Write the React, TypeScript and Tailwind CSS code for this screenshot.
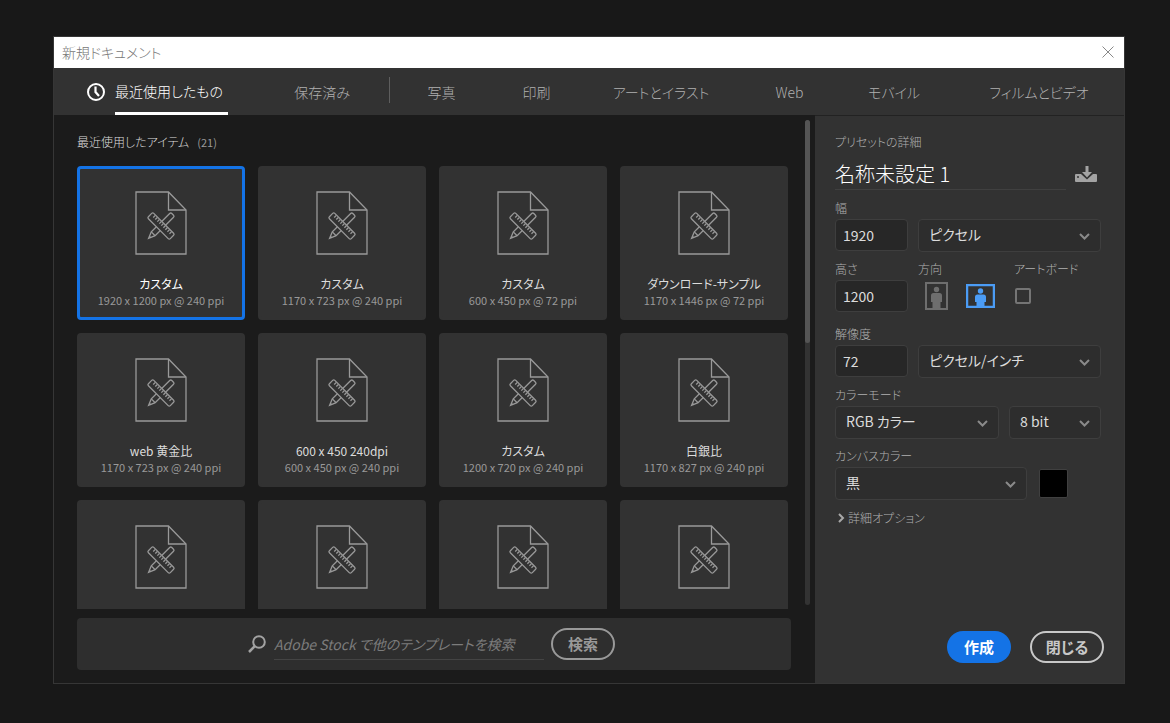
import { useState } from "react";
import clsx from "clsx";

const tabs = [
  { label: "写真", width: "w-[95px]" },
  { label: "印刷", width: "w-[95px]" },
  { label: "アートとイラスト", width: "w-[154px]" },
  { label: "Web", width: "w-[103px]" },
  { label: "モバイル", width: "w-[106px]" },
  { label: "フィルムとビデオ", width: "w-[177px] pl-[7px]" },
];

const presets = [
  { title: "カスタム", size: "1920 x 1200 px @ 240 ppi" },
  { title: "カスタム", size: "1170 x 723 px @ 240 ppi" },
  { title: "カスタム", size: "600 x 450 px @ 72 ppi" },
  { title: "ダウンロード-サンプル", size: "1170 x 1446 px @ 72 ppi" },
  { title: "web 黄金比", size: "1170 x 723 px @ 240 ppi" },
  { title: "600 x 450 240dpi", size: "600 x 450 px @ 240 ppi" },
  { title: "カスタム", size: "1200 x 720 px @ 240 ppi" },
  { title: "白銀比", size: "1170 x 827 px @ 240 ppi" },
  { title: "", size: "" },
  { title: "", size: "" },
  { title: "", size: "" },
  { title: "", size: "" },
];

function ClockIcon() {
  return (
    <svg width="20" height="20" viewBox="0 0 20 20" fill="none" stroke="#fff" strokeWidth="2">
      <circle cx="10" cy="10" r="8" />
      <path d="M9.500 4.500V10l3.500 4" strokeWidth="2.200" />
    </svg>
  );
}

function DocumentIcon() {
  return (
    <svg width="52" height="64" viewBox="0 0 52 64" fill="none" stroke="#999" strokeWidth="1.300">
      <path d="M1 1h32.500L51 19v44H1z" />
      <path d="M33.500 1v18H51" />
      <g transform="translate(26 35) rotate(-45)">
        <path d="M-11-2.700L-17.500 0l6.500 2.700h26a1.500 1.500 0 0 0 1.500-1.500v-2.400a1.500 1.500 0 0 0-1.500-1.500z" />
        <path d="M-11-2.700v5.400M-15.500-.8v1.600" />
      </g>
      <g transform="translate(26 35) rotate(45)">
        <rect x="-15.500" y="-3.800" width="31" height="7.600" rx="1.500" fill="#323232" />
        <path d="M-11.500-3.500v3M-8.600-3.500v3M-5.700-3.500v3M-2.900-3.500v3M0-3.500v3M2.900-3.500v3M5.700-3.500v3M8.600-3.500v3M11.500-3.500v3" />
      </g>
    </svg>
  );
}

function SaveIcon() {
  return (
    <svg width="22" height="17" viewBox="0 0 22 17" fill="#a3a3a3">
      <path d="M1 8h5l6 5.500L18 8h3a1 1 0 0 1 1 1v6a1 1 0 0 1-1 1H1a1 1 0 0 1-1-1V9a1 1 0 0 1 1-1z" />
      <path d="M10.500 0h3v6H17l-5 5.500L7 6h3.500z" />
      <circle cx="3" cy="11" r="1" fill="#323232" />
    </svg>
  );
}

function PortraitIcon() {
  return (
    <svg width="23" height="28" viewBox="0 0 23 28" fill="#6e6e6e">
      <rect x="1" y="1" width="21" height="26" fill="none" stroke="#6e6e6e" strokeWidth="2" />
      <circle cx="11.500" cy="7.500" r="2.700" />
      <path d="M8.500 11h6a2.500 2.500 0 0 1 2.500 2.500V20h-1.500v6h-8v-6H6v-6.500A2.500 2.500 0 0 1 8.500 11z" />
    </svg>
  );
}

function LandscapeIcon() {
  return (
    <svg width="29" height="24" viewBox="0 0 29 24" fill="#4b9cf5">
      <rect x="1" y="1" width="27" height="22" fill="none" stroke="#4b9cf5" strokeWidth="2.500" />
      <circle cx="14.500" cy="7" r="2.700" />
      <path d="M11.500 10.500h6a2.500 2.500 0 0 1 2.500 2.500v5h-1.500v4.500h-8V18H9v-5a2.500 2.500 0 0 1 2.500-2.500z" />
    </svg>
  );
}

function SearchIcon() {
  return (
    <svg width="18" height="18" viewBox="0 0 18 18" fill="none" stroke="#a3a3a3" strokeWidth="2">
      <circle cx="11" cy="7" r="5.800" />
      <path d="M6.800 11.200L1 17" strokeWidth="2.500" />
    </svg>
  );
}

function PresetCard({
  title,
  size,
  selected,
  onClick,
}: {
  title: string;
  size: string;
  selected: boolean;
  onClick: () => void;
}) {
  return (
    <button
      type="button"
      aria-pressed={selected}
      onClick={onClick}
      className={clsx(
        "flex h-[154px] flex-col items-center rounded border-3 bg-[#323232] pt-[22px]",
        selected ? "border-[#1473e6]" : "border-[#323232]"
      )}
    >
      <DocumentIcon />
      <span
        className={clsx(
          "mt-[21px] text-xs leading-4",
          selected ? "text-white" : "text-[#dcdcdc]"
        )}
      >
        {title}
      </span>
      <span className="text-[11px] leading-4 text-[#999]">{size}</span>
    </button>
  );
}

function Select({ id, options, className }: { id: string; options: string[]; className: string }) {
  return (
    <div className={clsx("relative", className)}>
      <select
        id={id}
        className="h-[33px] w-full appearance-none rounded border border-[#3e3e3e] bg-[#2d2d2d] pr-8 pb-[3px] pl-[10px] text-sm text-[#dcdcdc]"
      >
        {options.map((o) => (
          <option key={o}>{o}</option>
        ))}
      </select>
      <svg
        className="pointer-events-none absolute top-[14px] right-[11px]"
        width="11"
        height="7"
        viewBox="0 0 11 7"
        fill="none"
        stroke="#8a8a8a"
        strokeWidth="2"
      >
        <path d="M1 1l4.500 4.500L10 1" />
      </svg>
    </div>
  );
}

function NumberField({ id, value }: { id: string; value: string }) {
  return (
    <input
      id={id}
      defaultValue={value}
      className="h-8 w-[73px] rounded border border-[#3e3e3e] bg-[#272727] px-[7px] text-sm text-[#dcdcdc]"
    />
  );
}

const labelClass = "mb-[3px] block text-xs leading-4 font-light text-[#b0b0b0]";

function Details() {
  const [landscape, setLandscape] = useState(true);

  return (
    <aside className="flex w-[309px] shrink-0 flex-col bg-[#323232] pt-[18px] pr-[23px] pb-5 pl-5">
      <label htmlFor="name" className="text-xs leading-4 font-light text-[#b0b0b0]">
        プリセットの詳細
      </label>
      <div className="flex items-center gap-[9px]">
        <input
          id="name"
          defaultValue="名称未設定 1"
          className="mt-2 h-8 min-w-0 flex-1 border-b border-[#404040] bg-transparent text-xl font-light text-white"
        />
        <button type="button" aria-label="プリセットを保存" className="mt-2 mr-1">
          <SaveIcon />
        </button>
      </div>

      <div className="mt-[10px]">
        <label htmlFor="width" className={labelClass}>
          幅
        </label>
        <div className="flex gap-[10px]">
          <NumberField id="width" value="1920" />
          <Select id="unit" options={["ピクセル", "インチ", "ミリメートル"]} className="flex-1" />
        </div>
      </div>

      <div className="mt-[9px] flex">
        <div className="w-[83px]">
          <label htmlFor="height" className={labelClass}>
            高さ
          </label>
          <NumberField id="height" value="1200" />
        </div>
        <div className="w-24">
          <span className={labelClass}>方向</span>
          <div className="flex h-8 items-center gap-[18px] pl-[7px]">
            <button
              type="button"
              aria-label="縦"
              aria-pressed={!landscape}
              onClick={() => setLandscape(false)}
            >
              <PortraitIcon />
            </button>
            <button
              type="button"
              aria-label="横"
              aria-pressed={landscape}
              onClick={() => setLandscape(true)}
            >
              <LandscapeIcon />
            </button>
          </div>
        </div>
        <div>
          <label htmlFor="artboard" className={labelClass}>
            アートボード
          </label>
          <div className="flex h-8 items-center pl-px">
            <input
              id="artboard"
              type="checkbox"
              className="size-4 appearance-none rounded-xs border-2 border-[#757575] checked:bg-[#1473e6]"
            />
          </div>
        </div>
      </div>

      <div className="mt-[14px]">
        <label htmlFor="resolution" className={labelClass}>
          解像度
        </label>
        <div className="flex gap-[10px]">
          <NumberField id="resolution" value="72" />
          <Select
            id="resolution-unit"
            options={["ピクセル/インチ", "ピクセル/センチ"]}
            className="flex-1"
          />
        </div>
      </div>

      <div className="mt-[9px]">
        <label htmlFor="mode" className={labelClass}>
          カラーモード
        </label>
        <div className="flex gap-[10px]">
          <Select id="mode" options={["RGB カラー", "CMYK カラー"]} className="flex-1" />
          <Select id="depth" options={["8 bit", "16 bit", "32 bit"]} className="w-[92px]" />
        </div>
      </div>

      <div className="mt-[9px]">
        <label htmlFor="canvas" className={labelClass}>
          カンバスカラー
        </label>
        <div className="flex items-center gap-3 pr-[33px]">
          <Select id="canvas" options={["黒", "白", "背景色"]} className="flex-1" />
          <button
            type="button"
            aria-label="カラーを選択"
            className="size-[29px] rounded-xs border border-[#404040] bg-black"
          />
        </div>
      </div>

      <button
        type="button"
        className="mt-[10px] flex items-center gap-[3px] self-start pl-[3px] text-xs leading-4 font-light text-[#b0b0b0]"
      >
        <svg width="7" height="10" viewBox="0 0 7 10" fill="none" stroke="#a8a8a8" strokeWidth="2">
          <path d="M1 1l4 4-4 4" />
        </svg>
        詳細オプション
      </button>

      <div className="-mr-[3px] mt-auto flex justify-end gap-[19px]">
        <button
          type="button"
          className="h-8 w-16 rounded-full bg-[#1473e6] text-[15px] font-bold text-white"
        >
          作成
        </button>
        <button
          type="button"
          className="h-8 w-[74px] rounded-full border-2 border-[#c8c8c8] text-[15px] font-bold text-[#c8c8c8]"
        >
          閉じる
        </button>
      </div>
    </aside>
  );
}

export default function App() {
  const [selected, setSelected] = useState(0);

  return (
    <div className="flex h-screen flex-col bg-[#181818] pt-9 pr-[45px] pb-[39px] pl-[53px] font-['Noto_Sans_CJK_JP',sans-serif] [font-feature-settings:'palt']">
      <div
        role="dialog"
        aria-labelledby="dialog-title"
        className="flex min-h-0 flex-1 flex-col border border-[#363636] bg-[#1b1b1b]"
      >
        <header className="flex h-[31px] shrink-0 items-center justify-between bg-white pr-[10px] pb-[2px] pl-2">
          <h1 id="dialog-title" className="text-sm font-light text-[#777]">
            新規ドキュメント
          </h1>
          <button type="button" aria-label="ウィンドウを閉じる">
            <svg width="12" height="12" viewBox="0 0 12 12" stroke="#888" strokeWidth="1">
              <path d="M.5.5l11 11M11.500.5l-11 11" />
            </svg>
          </button>
        </header>

        <nav className="flex h-[47px] shrink-0 bg-[#323232] pl-8 text-sm font-light whitespace-nowrap text-[#b0b0b0]">
          <button type="button" className="flex items-center gap-[9px] text-white">
            <ClockIcon />
            <span className="flex h-full w-[113px] items-center border-b-3 border-white pt-[2px]">
              最近使用したもの
            </span>
          </button>
          <button type="button" className="w-[161px] pr-[39px] text-right">
            保存済み
          </button>
          <span className="mt-[9px] h-[26px] w-px bg-[#5e5e5e]" />
          <div className="flex pl-1">
            {tabs.map((t) => (
              <button key={t.label} type="button" className={t.width}>
                {t.label}
              </button>
            ))}
          </div>
        </nav>

        <div className="flex min-h-0 flex-1">
          <main className="flex min-w-0 flex-1 flex-col pb-[13px] pl-[23px]">
            <div className="flex min-h-0 flex-1 pt-[5px]">
              <section className="flex min-w-0 flex-1 flex-col overflow-hidden">
                <h2 className="mt-3 mb-[14px] flex shrink-0 items-center gap-2 text-xs leading-5 font-light text-[#dcdcdc]">
                  最近使用したアイテム
                  <span className="text-[11px] font-normal text-[#999]">(21)</span>
                </h2>
                <div className="grid min-h-0 flex-1 auto-rows-min grid-cols-4 gap-[13px] overflow-hidden">
                  {presets.map((p, i) => (
                    <PresetCard
                      key={i}
                      title={p.title}
                      size={p.size}
                      selected={i === selected}
                      onClick={() => setSelected(i)}
                    />
                  ))}
                </div>
              </section>
              <div className="mr-[5px] mb-1 ml-[17px] w-[5px] rounded-full bg-[#333]">
                <div className="h-[46%] rounded-full bg-[#555]" />
              </div>
            </div>
            <form
              onSubmit={(e) => e.preventDefault()}
              className="mt-[9px] mr-6 flex h-[52px] shrink-0 items-center justify-center rounded bg-[#2e2e2e] pr-[5px]"
            >
              <SearchIcon />
              <input
                aria-label="テンプレートを検索"
                placeholder="Adobe Stock で他のテンプレートを検索"
                className="mr-[7px] ml-2 h-8 w-[270px] border-b border-[#444] bg-transparent text-sm text-white italic placeholder:text-[#7c7c7c]"
              />
              <button
                type="submit"
                className="h-8 w-16 rounded-full border-2 border-[#999] text-[15px] font-bold text-[#999]"
              >
                検索
              </button>
            </form>
          </main>
          <div className="flex border-t border-[#222]">
            <Details />
          </div>
        </div>
      </div>
    </div>
  );
}
